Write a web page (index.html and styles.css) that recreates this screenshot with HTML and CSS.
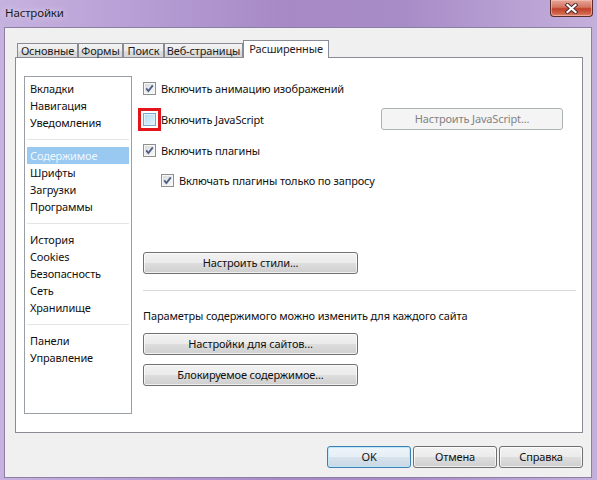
FILE: index.html
```html
<!DOCTYPE html>
<html lang="ru">
<head>
<meta charset="utf-8">
<title>Настройки</title>
<link rel="stylesheet" href="styles.css">
</head>
<body>
<div class="window">
  <div class="titlebar">
    <span class="title">Настройки</span>
    <span class="close">
      <svg width="13" height="11" viewBox="0 0 13 11">
        <path d="M2.5 2 L10.5 9 M10.5 2 L2.5 9" stroke="#4a2a2a" stroke-width="4" stroke-linecap="square"/>
        <path d="M2.5 2 L10.5 9 M10.5 2 L2.5 9" stroke="#ffffff" stroke-width="2.2" stroke-linecap="square"/>
      </svg>
    </span>
  </div>
  <div class="client">
    <div class="tabs">
      <div class="tab w1">Основные</div>
      <div class="tab w2">Формы</div>
      <div class="tab w3">Поиск</div>
      <div class="tab w4">Веб-страницы</div>
      <div class="tab active">Расширенные</div>
    </div>
    <div class="panel">
      <div class="nav">
        <div class="item">Вкладки</div>
        <div class="item">Навигация</div>
        <div class="item">Уведомления</div>
        <div class="sep"></div>
        <div class="item selected">Содержимое</div>
        <div class="item">Шрифты</div>
        <div class="item">Загрузки</div>
        <div class="item">Программы</div>
        <div class="sep"></div>
        <div class="item">История</div>
        <div class="item">Cookies</div>
        <div class="item">Безопасность</div>
        <div class="item">Сеть</div>
        <div class="item">Хранилище</div>
        <div class="sep"></div>
        <div class="item">Панели</div>
        <div class="item">Управление</div>
      </div>
      <div class="content">
        <div class="row r1">
          <span class="cb"><svg width="11" height="11" viewBox="0 0 11 11"><path d="M2.2 5.4 L4.4 8 L8.8 2.4" fill="none" stroke="#4c5d86" stroke-width="1.8"/></svg></span>
          <span class="label">Включить анимацию изображений</span>
        </div>
        <div class="row r2">
          <span class="cb hover marked"></span>
          <span class="label">Включить JavaScript</span>
          <button class="btn disabled jsbtn">Настроить JavaScript...</button>
        </div>
        <div class="row r3">
          <span class="cb"><svg width="11" height="11" viewBox="0 0 11 11"><path d="M2.2 5.4 L4.4 8 L8.8 2.4" fill="none" stroke="#4c5d86" stroke-width="1.8"/></svg></span>
          <span class="label">Включить плагины</span>
        </div>
        <div class="row r4 indent">
          <span class="cb"><svg width="11" height="11" viewBox="0 0 11 11"><path d="M2.2 5.4 L4.4 8 L8.8 2.4" fill="none" stroke="#4c5d86" stroke-width="1.8"/></svg></span>
          <span class="label">Включать плагины только по запросу</span>
        </div>
        <button class="btn wide styles-btn">Настроить стили...</button>
        <div class="hsep"></div>
        <div class="note">Параметры содержимого можно изменить для каждого сайта</div>
        <button class="btn wide sites-btn">Настройки для сайтов...</button>
        <button class="btn wide block-btn">Блокируемое содержимое...</button>
      </div>
    </div>
    <div class="footer">
      <button class="btn fbtn default">OK</button>
      <button class="btn fbtn">Отмена</button>
      <button class="btn fbtn">Справка</button>
    </div>
  </div>
</div>
</body>
</html>
```

FILE: styles.css
```css
html, body {
  margin: 0;
  padding: 0;
}
body {
  width: 597px;
  height: 480px;
  overflow: hidden;
  font-family: "Noto Sans", "Open Sans", sans-serif;
  font-size: 11px;
  letter-spacing: -0.15px;
  color: #000;
  background: linear-gradient(90deg, #c6b2df 0%, #b89fd5 22%, #a689c5 48%, #a88cc7 68%, #c4b0dc 100%);
}
.window {
  display: flex;
  flex-direction: column;
  width: 597px;
  height: 480px;
}
.titlebar {
  height: 27px;
  display: flex;
  align-items: flex-start;
  flex-shrink: 0;
}
.title {
  margin: 5px 0 0 5px;
  line-height: 15px;
  font-size: 11.5px;
  color: #1a1a1a;
  text-shadow: 0 0 6px rgba(255,255,255,0.8);
}
.close {
  margin-left: auto;
  margin-right: 4px;
  width: 43px;
  height: 17px;
  box-sizing: border-box;
  border: 1px solid #5b2b2e;
  border-top: none;
  border-radius: 0 0 4px 4px;
  background: linear-gradient(#e6a89c 0%, #d4735f 45%, #c0402b 55%, #d0654a 85%, #e08a6e 100%);
  box-shadow: inset 0 0 0 1px rgba(255,200,190,0.55);
  display: flex;
  align-items: center;
  justify-content: center;
}
.client {
  margin-left: 4px;
  width: 588px;
  height: 451px;
  box-sizing: border-box;
  border: 1px solid #8c7fa3;
  background: #f0f0f0;
  padding-top: 12px;
  display: flex;
  flex-direction: column;
}
.tabs {
  display: flex;
  align-items: flex-end;
  height: 17px;
  margin-left: 12px;
  position: relative;
  z-index: 2;
}
.tab {
  box-sizing: border-box;
  height: 14px;
  border: 1px solid #898c95;
  border-bottom: none;
  background: linear-gradient(#f3f3f3 0%, #ebebeb 50%, #dddddd 51%, #d6d6d6 100%);
  line-height: 13px;
  text-align: center;
  color: #1e1e1e;
  white-space: nowrap;
}
.w1 { width: 61px; }
.w2 { width: 45px; }
.w3 { width: 41px; }
.w4 { width: 79px; }
.tab.active {
  width: 86px;
  height: 18px;
  margin-bottom: -1px;
  background: #ffffff;
  line-height: 15px;
}
.panel {
  margin-left: 10px;
  width: 568px;
  height: 376px;
  box-sizing: border-box;
  border: 1px solid #898c95;
  background: #ffffff;
  padding: 18px 6px 18px 8px;
  display: flex;
  position: relative;
  z-index: 1;
}
.nav {
  width: 108px;
  box-sizing: border-box;
  border: 1px solid #9a9ea5;
  padding: 3px 1px;
  flex-shrink: 0;
}
.item {
  height: 17px;
  line-height: 17px;
  margin: 0 1px;
  padding-left: 3px;
  white-space: nowrap;
  color: #111;
}
.item.selected {
  background: #99c9f0;
  color: #eef7ff;
}
.sep {
  height: 1px;
  margin: 8px 1px 7px;
  background: #e4e4e4;
}
.content {
  flex: 1;
  margin-left: 11px;
  padding-top: 2px;
  display: flex;
  flex-direction: column;
  align-items: flex-start;
}
.row {
  display: flex;
  align-items: center;
  height: 20px;
  align-self: stretch;
}
.r2 { margin-top: 10px; height: 22px; }
.r3 { margin-top: 10px; }
.r4 { margin-top: 10px; }
.indent { padding-left: 18px; }
.cb {
  width: 13px;
  height: 13px;
  box-sizing: border-box;
  border: 1px solid #8e8f8f;
  background: linear-gradient(135deg, #d3d6da 0%, #eeeeee 60%, #fafafa 100%);
  box-shadow: inset 0 0 0 1px #f6f6f6;
  display: flex;
  align-items: center;
  justify-content: center;
  flex-shrink: 0;
  margin-right: 5px;
}
.cb svg { display: block; }
.cb.hover {
  border-color: #7aa6cf;
  background: linear-gradient(135deg, #aedbf8 0%, #cdebfc 60%, #e6f6fe 100%);
  box-shadow: inset 0 0 0 1px #dff2fd;
}
.cb.marked {
  outline: 3px solid #e3141b;
  outline-offset: 2px;
}
.label {
  white-space: nowrap;
  color: #111;
}
.btn {
  font-family: inherit;
  font-size: 11px;
  letter-spacing: -0.15px;
  color: #111;
  height: 22px;
  box-sizing: border-box;
  border: 1px solid #707070;
  border-radius: 3px;
  background: linear-gradient(#f2f2f2 0%, #ebebeb 48%, #dddddd 52%, #cfcfcf 100%);
  box-shadow: inset 0 0 0 1px rgba(255,255,255,0.7);
  padding: 0;
  margin: 0;
  line-height: 18px;
  text-align: center;
  white-space: nowrap;
}
.btn.disabled {
  border-color: #adb2b5;
  background: #f4f4f4;
  box-shadow: none;
  color: #838383;
}
.jsbtn {
  width: 182px;
  margin-left: auto;
  margin-right: 13px;
}
.wide { width: 215px; }
.styles-btn { margin-top: 62px; }
.hsep {
  align-self: stretch;
  height: 1px;
  margin-top: 16px;
  background: #dadada;
}
.note {
  margin-top: 16px;
  line-height: 17px;
  height: 17px;
  white-space: nowrap;
  color: #111;
}
.sites-btn { margin-top: 9px; }
.block-btn { margin-top: 9px; }
.footer {
  display: flex;
  justify-content: flex-end;
  gap: 2px;
  margin-top: 13px;
  padding-right: 8px;
}
.fbtn { width: 84px; }
.btn.default {
  border-color: #3c7fb1;
  box-shadow: inset 0 0 0 1px #bfe6fa;
  background: linear-gradient(#eef5fa 0%, #e6eff6 48%, #d6e2ec 52%, #cad8e4 100%);
}
```
